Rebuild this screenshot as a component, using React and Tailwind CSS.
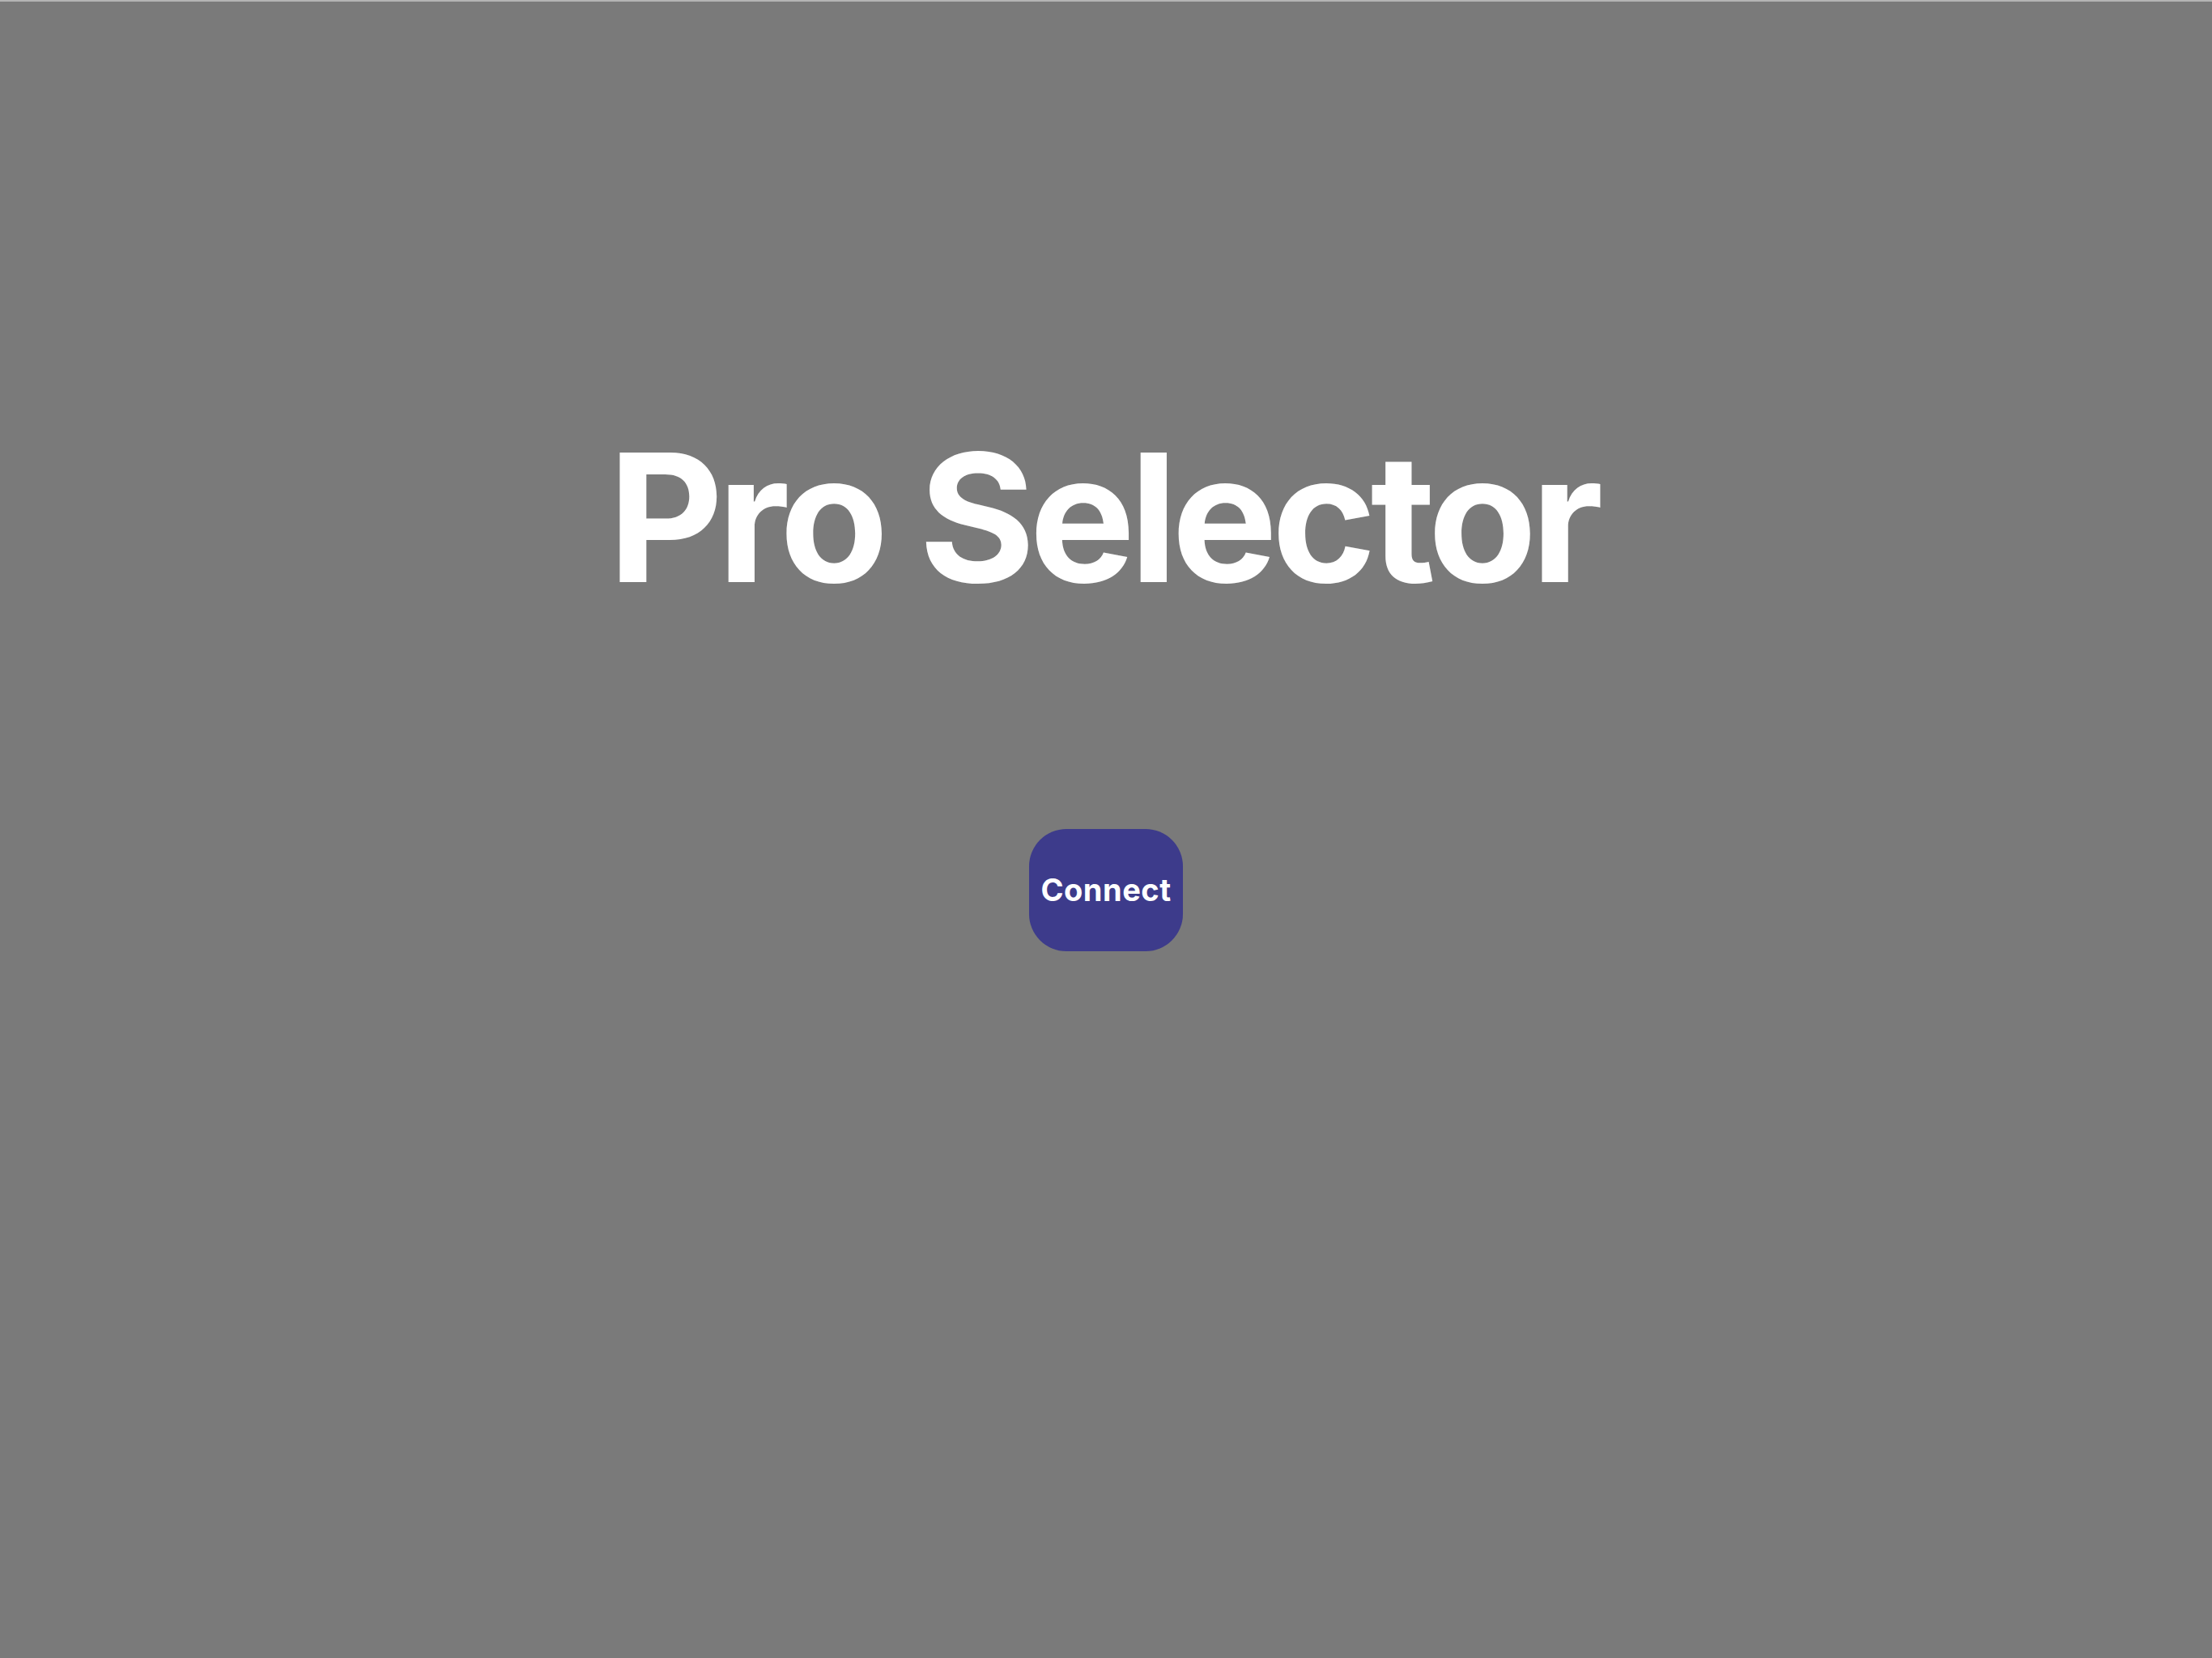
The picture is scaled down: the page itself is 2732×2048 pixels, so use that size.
import React from "react";

export default function App() {
  return (
    <div className="w-[2732px] h-[2048px] bg-[#7a7a7a] border-t-2 border-[#b4b4b4] flex flex-col items-center font-['Inter','Liberation_Sans',sans-serif]">
      {/* title */}
      <h1 className="mt-[527px] text-[220px] leading-none font-bold text-white tracking-[-7.5px] pr-[8px]">
        Pro Selector
      </h1>

      {/* connect button */}
      <button className="mt-[275px] w-[190px] h-[151px] rounded-[46px] bg-[#3d3b8b] text-white text-[38px] font-bold tracking-[0.5px]">
        Connect
      </button>
    </div>
  );
}
